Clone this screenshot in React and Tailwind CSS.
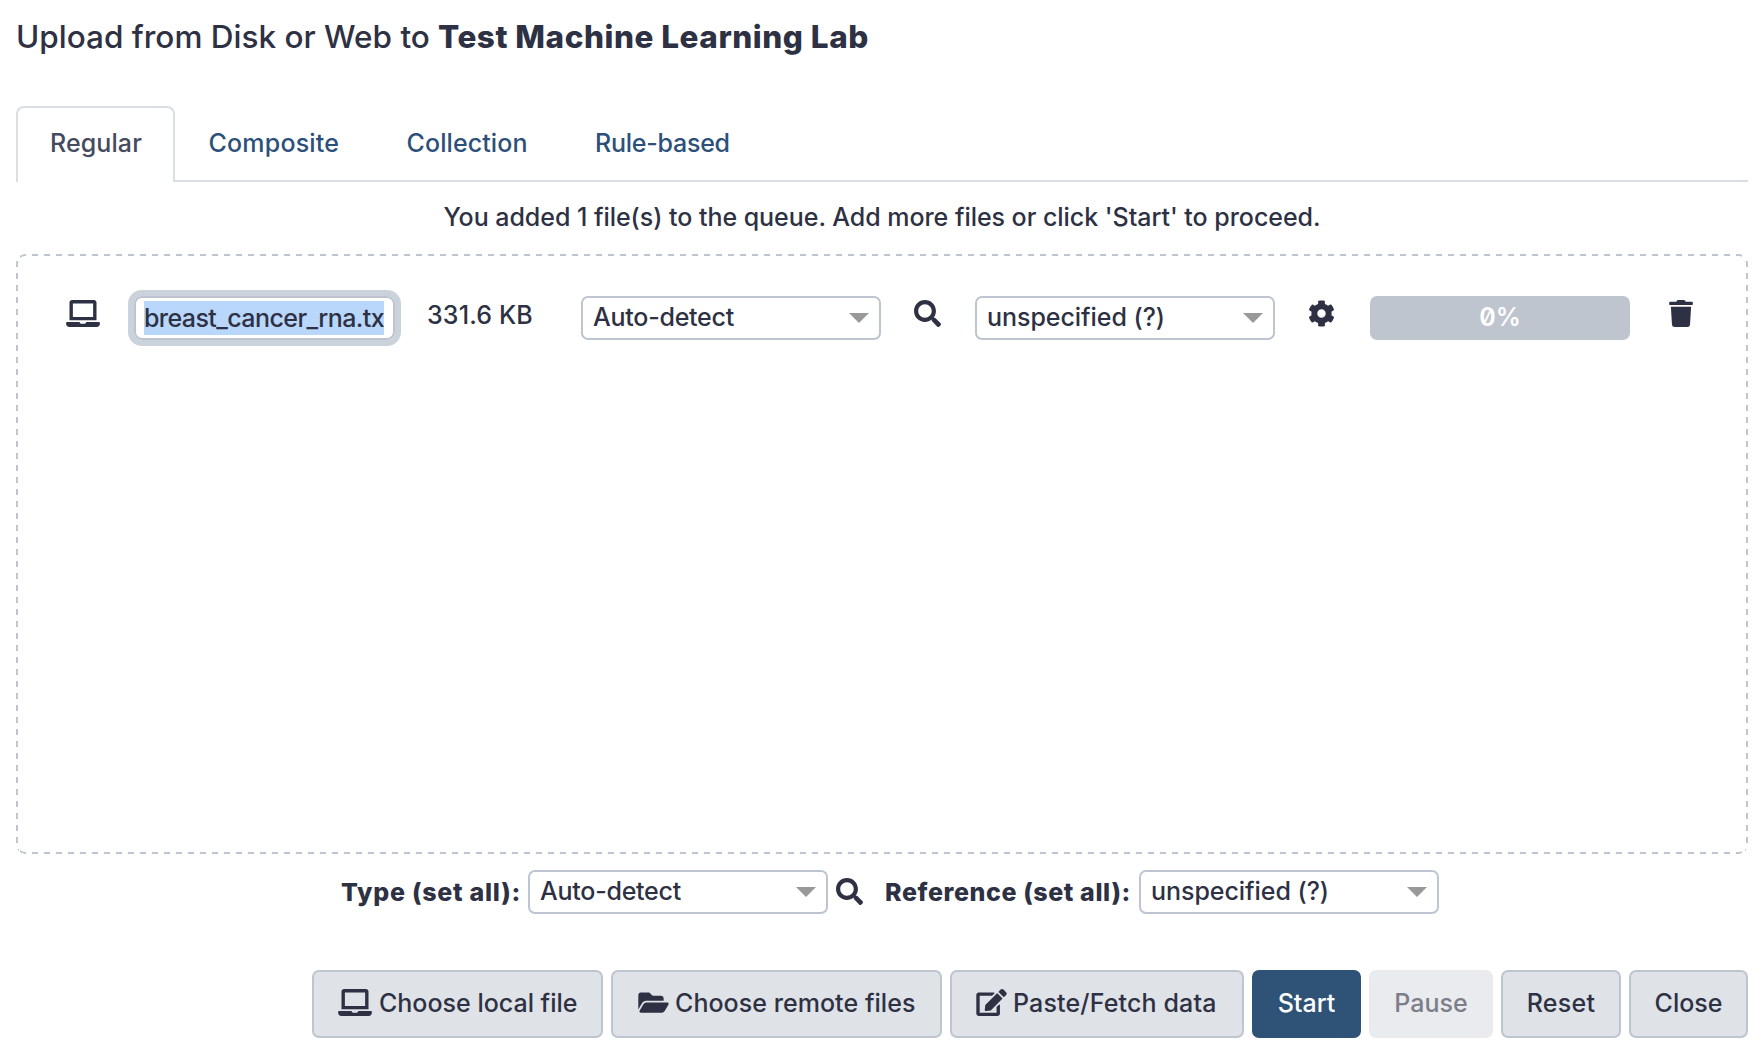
import React from "react";
import { FaLaptop, FaSearch, FaCog, FaTrash, FaFolderOpen, FaEdit } from "react-icons/fa";

function Select({ children, spacing }) {
  return (
    <div className="flex h-11 w-[300px] shrink-0 items-center justify-between rounded-[7px] border-2 border-[#bdc5d1] bg-white pr-[10px] pl-[10px]">
      <span className={`relative -top-px whitespace-nowrap ${spacing}`}>{children}</span>
      <span className="h-0 w-0 border-x-[10px] border-t-[10px] border-x-transparent border-t-[#999999]" />
    </div>
  );
}

function Button({ className, children }) {
  return (
    <button
      type="button"
      className={`flex h-[68px] shrink-0 items-center rounded-[7px] border-2 pb-[2px] whitespace-nowrap ${className}`}
    >
      {children}
    </button>
  );
}

const grey = "border-[#bdc6d0] bg-[#dfe2e7]";

export default function App() {
  return (
    <div className="h-[1058px] w-[1764px] overflow-hidden bg-white px-4 font-['Inter',sans-serif] text-[25px] leading-[30px] font-[450] text-[#2d3143]">
      <h4 className="flex h-[106px] text-[31.5px] leading-[74px] whitespace-nowrap">
        <span className="w-[422px] tracking-[0px]">Upload from Disk or Web to</span>
        <b className="font-[800] tracking-[0.52px]">Test Machine Learning Lab</b>
      </h4>

      <nav className="flex h-[76px] border-b-2 border-[#d9dfe4] leading-[74px] text-[#2c5079]">
        <a className="h-[76px] w-[159px] shrink-0 rounded-t-[8px] border-2 border-b-0 border-[#d9dfe4] bg-white pl-[32px] leading-[70px] tracking-[0.1px] text-[#454a5f]">
          Regular
        </a>
        <a className="ml-[33.5px] w-[198px] tracking-[0.2px]">Composite</a>
        <a className="w-[188.5px] tracking-[0.1px]">Collection</a>
        <a className="-tracking-[0.25px]">Rule-based</a>
      </nav>

      <p className="h-[72px] text-center leading-[70px] -tracking-[0.04px]">
        You added 1 file(s) to the queue. Add more files or click 'Start' to proceed.
      </p>

      <section className="relative h-[600px] px-[50px] pt-[42px]">
        <div className="pointer-events-none absolute inset-0 rounded-[9px] border-2 border-[#bdc5d1] [mask-image:linear-gradient(90deg,#000_50%,transparent_50%),linear-gradient(90deg,#000_50%,transparent_50%),linear-gradient(#000_50%,transparent_50%),linear-gradient(#000_50%,transparent_50%)] [mask-origin:border-box] [mask-position:4px_0,4px_100%,0_7px,100%_7px] [mask-repeat:repeat-x,repeat-x,repeat-y,repeat-y] [mask-size:12px_4px,12px_4px,3px_12px,3px_12px]" />
        <div className="flex h-11 items-center">
          <FaLaptop className="relative -top-[4.5px] h-[27px] w-[34px] shrink-0" />
          <div className="ml-[34px] flex h-11 w-[261px] shrink-0 items-center rounded-[8px] border-2 border-[#bdc4cf] px-[8px] shadow-[0_0_0_6px_#cad2dc]">
            <span className="h-[34px] w-[240px] bg-[#b9d6fb] leading-[34px] -tracking-[0.58px] whitespace-nowrap">
              breast_cancer_rna.tx
            </span>
          </div>
          <span className="relative -top-[3px] ml-[32px] w-[154px] shrink-0 tracking-[0.15px]">331.6 KB</span>
          <Select spacing="-tracking-[0.25px]">Auto-detect</Select>
          <FaSearch className="relative -top-[4.5px] ml-[33px] h-[27px] w-[27px] shrink-0" />
          <div className="ml-[34px]">
            <Select spacing="-tracking-[0.05px]">unspecified (?)</Select>
          </div>
          <FaCog className="relative -top-[4.5px] ml-[33px] h-[27px] w-[27px] shrink-0" />
          <div className="ml-[35px] flex h-11 w-[260px] shrink-0 items-center justify-center rounded-[7px] bg-[#bfc5cf] pb-[2px] font-semibold text-white [font-feature-settings:'zero']">
            0%
          </div>
          <FaTrash className="relative -top-[4.5px] ml-[39px] h-[27px] w-[24px] shrink-0" />
        </div>
      </section>

      <div className="flex h-[76px] items-center pl-[325px]">
        <b className="w-[187px] shrink-0 font-[800] tracking-[0.73px] whitespace-nowrap">Type (set all):</b>
        <Select spacing="-tracking-[0.25px]">Auto-detect</Select>
        <FaSearch className="relative -top-px ml-2 h-[27px] w-[27px] shrink-0" />
        <b className="ml-[22px] w-[254px] shrink-0 font-[800] tracking-[0.6px] whitespace-nowrap">
          Reference (set all):
        </b>
        <Select spacing="-tracking-[0.05px]">unspecified (?)</Select>
      </div>

      <div className="mt-10 flex justify-end gap-2">
        <Button className={`w-[291px] pl-[24px] tracking-[0px] ${grey}`}>
          <FaLaptop className="relative -top-px mr-[7px] h-[27px] w-[34px]" />
          Choose local file
        </Button>
        <Button className={`w-[331px] pl-[25px] tracking-[0.05px] ${grey}`}>
          <FaFolderOpen className="relative -top-px mr-[6px] h-[27px] w-[31px]" />
          Choose remote files
        </Button>
        <Button className={`w-[294px] pl-[24px] tracking-[0.15px] ${grey}`}>
          <FaEdit className="relative -top-px mr-[6px] h-[27px] w-[31px]" />
          Paste/Fetch data
        </Button>
        <Button className="w-[109px] justify-center border-[#2f5277] bg-[#2f5277] font-medium text-white">Start</Button>
        <Button className="w-[124px] justify-center border-[#eaebef] bg-[#eaebef] text-[#7c7e89]">Pause</Button>
        <Button className={`w-[120px] justify-center tracking-[0.3px] ${grey}`}>Reset</Button>
        <Button className={`w-[119px] justify-center ${grey}`}>Close</Button>
      </div>
    </div>
  );
}
